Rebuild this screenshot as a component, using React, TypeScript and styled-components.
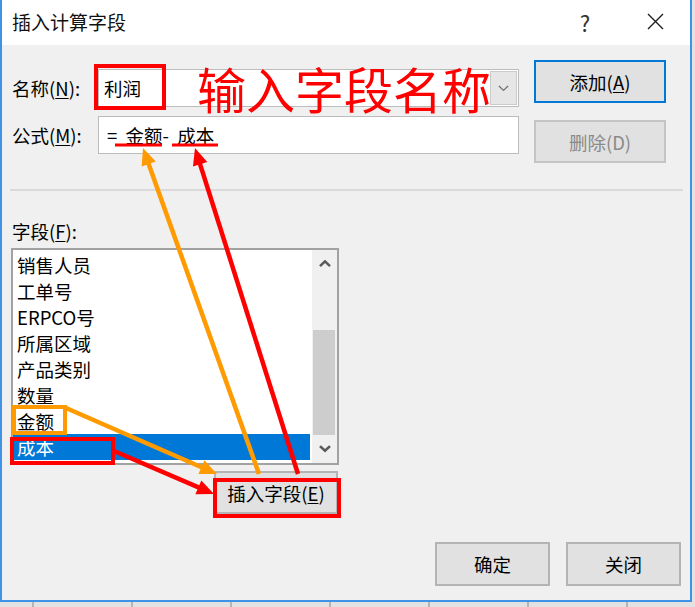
import React from 'react';
import styled, { createGlobalStyle } from 'styled-components';

const FIELDS = ['销售人员', '工单号', 'ERPCO号', '所属区域', '产品类别', '数量', '金额', '成本'];
const SELECTED = '成本';

const ORANGE = '#ff9a00';
const RED = '#ff0000';

type Pt = [number, number];

// annotation arrows: line + filled head, coordinates in page pixels
const Arrow = ({ from, to, color }: { from: Pt; to: Pt; color: string }) => {
  const [x1, y1] = from;
  const [x2, y2] = to;
  const len = Math.hypot(x2 - x1, y2 - y1);
  const ux = (x2 - x1) / len;
  const uy = (y2 - y1) / len;
  const head = 17;
  const half = 7.5;
  const bx = x2 - ux * head;
  const by = y2 - uy * head;
  const px = -uy;
  const py = ux;
  const pts = `${x2},${y2} ${bx + px * half},${by + py * half} ${bx - px * half},${by - py * half}`;
  return (
    <g>
      <line x1={x1} y1={y1} x2={bx + ux * 2} y2={by + uy * 2} stroke={color} strokeWidth={4.5} />
      <polygon points={pts} fill={color} />
    </g>
  );
};

const Chevron = ({ up, size = 12, weight = 2.6, color = '#5a5a5a' }: { up?: boolean; size?: number; weight?: number; color?: string }) => (
  <svg width={size} height={size * 0.6} viewBox="0 0 12 7">
    <polyline
      points={up ? '1,6 6,1.3 11,6' : '1,1 6,5.7 11,1'}
      fill="none"
      stroke={color}
      strokeWidth={weight}
      strokeLinejoin="miter"
    />
  </svg>
);

const App = () => {
  return (
    <>
      <GlobalStyle />
      <Window>
        <TitleBar>
          <Title>插入计算字段</Title>
          <CaptionButton>?</CaptionButton>
          <CaptionButton>
            <svg width="17" height="17" viewBox="0 0 17 17">
              <path d="M1 1 L16 16 M16 1 L1 16" stroke="#1e1e1e" strokeWidth="1.4" />
            </svg>
          </CaptionButton>
        </TitleBar>

        <Body>
          <TopSection>
            <FormGrid>
              <Label>
                名称(<u>N</u>):
              </Label>
              <Combo>
                <ComboText>利润</ComboText>
                <DropButton>
                  <Chevron size={11} weight={1.3} color="#6a6a6a" />
                </DropButton>
              </Combo>
              <Label>
                公式(<u>M</u>):
              </Label>
              <TextField>{'=  金额-  成本'}</TextField>
            </FormGrid>
            <SideButtons>
              <DialogButton $primary $width={132} $height={43}>
                添加(<u>A</u>)
              </DialogButton>
              <DialogButton $disabled $width={132} $height={43}>
                删除(D)
              </DialogButton>
            </SideButtons>
          </TopSection>

          <Separator />

          <FieldsColumn>
            <FieldsLabel>
              字段(<u>F</u>):
            </FieldsLabel>
            <ListBox>
              <Items>
                {FIELDS.map((f) => (
                  <Item key={f} $selected={f === SELECTED}>
                    {f}
                  </Item>
                ))}
              </Items>
              <ScrollBar>
                <ScrollArrow>
                  <Chevron up />
                </ScrollArrow>
                <Track>
                  <Thumb />
                </Track>
                <ScrollArrow>
                  <Chevron />
                </ScrollArrow>
              </ScrollBar>
            </ListBox>
            <InsertButton $width={124} $height={43}>
              插入字段(<u>E</u>)
            </InsertButton>
          </FieldsColumn>

          <Footer>
            <DialogButton $width={115} $height={44}>
              确定
            </DialogButton>
            <DialogButton $width={115} $height={44}>
              关闭
            </DialogButton>
          </Footer>
        </Body>

        <Callout>输入字段名称</Callout>
        <Overlay width={695} height={607}>
          <rect x={96} y={66} width={68} height={42} fill="none" stroke={RED} strokeWidth={4} />
          <line x1={115} y1={145} x2={162} y2={145} stroke={RED} strokeWidth={3} />
          <line x1={172} y1={145} x2={218} y2={145} stroke={RED} strokeWidth={3} />
          <rect x={14} y={407} width={51} height={26} fill="none" stroke={ORANGE} strokeWidth={4} />
          <rect x={12} y={439} width={101} height={24} fill="none" stroke={RED} strokeWidth={4} />
          <rect x={215} y={480} width={124} height={36} fill="none" stroke={RED} strokeWidth={4} />
          <Arrow from={[66, 408]} to={[217, 474]} color={ORANGE} />
          <Arrow from={[114, 451]} to={[214, 494]} color={RED} />
          <Arrow from={[259, 474]} to={[143, 148]} color={ORANGE} />
          <Arrow from={[298, 474]} to={[195, 148]} color={RED} />
        </Overlay>
      </Window>
    </>
  );
};

const GlobalStyle = createGlobalStyle`
  html, body {
    margin: 0;
    padding: 0;
  }
  body {
    width: 695px;
    height: 607px;
    overflow: hidden;
    background-color: #e2e2e2;
    background-image: repeating-linear-gradient(
      90deg,
      transparent 0 32px,
      #b4b4b4 32px 34px,
      transparent 34px 99px
    );
    font-family: "Noto Sans CJK SC", "Noto Sans", sans-serif;
  }
  u {
    text-underline-offset: 2px;
  }
`;

const Window = styled.div`
  position: relative;
  width: 692px;
  height: 602px;
  box-sizing: border-box;
  border: 2px solid #3f92e6;
  border-top: none;
  background: #f0f0f0;
  display: flex;
  flex-direction: column;
  color: #000;
  font-size: 18.5px;
`;

const TitleBar = styled.div`
  height: 45px;
  flex-shrink: 0;
  display: flex;
  align-items: center;
  background: #fff;
  padding-left: 10px;
`;

const Title = styled.div`
  flex: 1;
  font-size: 19px;
  line-height: 24px;
  margin-top: -2px;
  color: #111;
`;

const CaptionButton = styled.div`
  width: 70px;
  height: 45px;
  display: flex;
  align-items: center;
  justify-content: center;
  font-size: 22px;
  color: #333;
  margin-top: -2px;
`;

const Body = styled.div`
  flex: 1;
  display: flex;
  flex-direction: column;
  padding: 15px 9px 14px 10px;
`;

const TopSection = styled.div`
  display: flex;
  align-items: flex-start;
`;

const FormGrid = styled.div`
  margin-top: 9px;
  display: grid;
  grid-template-columns: 86px 421px;
  row-gap: 9px;
  align-items: center;
`;

const Label = styled.div`
  line-height: 26px;
  white-space: nowrap;
`;

const Combo = styled.div`
  height: 38px;
  box-sizing: border-box;
  display: flex;
  align-items: stretch;
  background: #fff;
  border: 1px solid #bcbcbc;
`;

const ComboText = styled.div`
  flex: 1;
  padding-left: 5px;
  line-height: 36px;
`;

const DropButton = styled.div`
  width: 25px;
  margin: 1px;
  display: flex;
  align-items: center;
  justify-content: center;
  background: #e6e6e6;
  border: 1px solid #cacaca;
`;

const TextField = styled.div`
  height: 38px;
  box-sizing: border-box;
  background: #fff;
  border: 1px solid #bcbcbc;
  padding-left: 8px;
  line-height: 36px;
  white-space: pre;
`;

const SideButtons = styled.div`
  margin-left: 15px;
  display: flex;
  flex-direction: column;
  gap: 17px;
`;

const DialogButton = styled.div<{ $width: number; $height: number; $primary?: boolean; $disabled?: boolean }>`
  width: ${(p) => p.$width}px;
  height: ${(p) => p.$height}px;
  box-sizing: border-box;
  display: flex;
  align-items: center;
  justify-content: center;
  background: #e1e1e1;
  border: 2px solid ${(p) => (p.$primary ? '#0078d7' : p.$disabled ? '#c4c4c4' : '#b4b4b4')};
  color: ${(p) => (p.$disabled ? '#8a8a8a' : '#000')};
  font-size: 18.5px;
`;

const InsertButton = styled(DialogButton)`
  margin-top: 6px;
  margin-right: 1px;
`;

const Separator = styled.div`
  height: 2px;
  margin: 26px -2px 0 -2px;
  background: #dadada;
`;

const FieldsColumn = styled.div`
  width: 328px;
  margin-left: -1px;
  display: flex;
  flex-direction: column;
  align-items: flex-end;
`;

const FieldsLabel = styled.div`
  align-self: stretch;
  padding-left: 1px;
  margin-top: 27px;
  line-height: 26px;
`;

const ListBox = styled.div`
  margin-top: 4px;
  width: 328px;
  height: 217px;
  box-sizing: border-box;
  border: 2px solid #a2a2a2;
  background: #fff;
  display: flex;
`;

const Items = styled.div`
  flex: 1;
  padding-top: 2px;
  margin-right: 2px;
`;

const Item = styled.div<{ $selected?: boolean }>`
  height: 26px;
  line-height: 26px;
  padding-left: 4px;
  white-space: nowrap;
  background: ${(p) => (p.$selected ? '#0078d7' : 'transparent')};
  color: ${(p) => (p.$selected ? '#fff' : '#000')};
`;

const ScrollBar = styled.div`
  width: 25px;
  display: flex;
  flex-direction: column;
  background: #f0f0f0;
`;

const ScrollArrow = styled.div`
  height: 28px;
  display: flex;
  align-items: center;
  justify-content: center;
`;

const Track = styled.div`
  flex: 1;
  display: flex;
  flex-direction: column;
  justify-content: flex-end;
  padding-bottom: 0;
`;

const Thumb = styled.div`
  height: 105px;
  margin: 0 2px 0 1px;
  background: #cdcdcd;
`;

const Footer = styled.div`
  margin-top: auto;
  display: flex;
  justify-content: flex-end;
  gap: 16px;
`;

const Callout = styled.div`
  position: absolute;
  left: 195px;
  top: 60px;
  font-size: 49px;
  line-height: 56px;
  color: ${RED};
  white-space: nowrap;
  pointer-events: none;
`;

const Overlay = styled.svg`
  position: absolute;
  left: -2px;
  top: 0;
  overflow: visible;
  pointer-events: none;
`;

export default App;
